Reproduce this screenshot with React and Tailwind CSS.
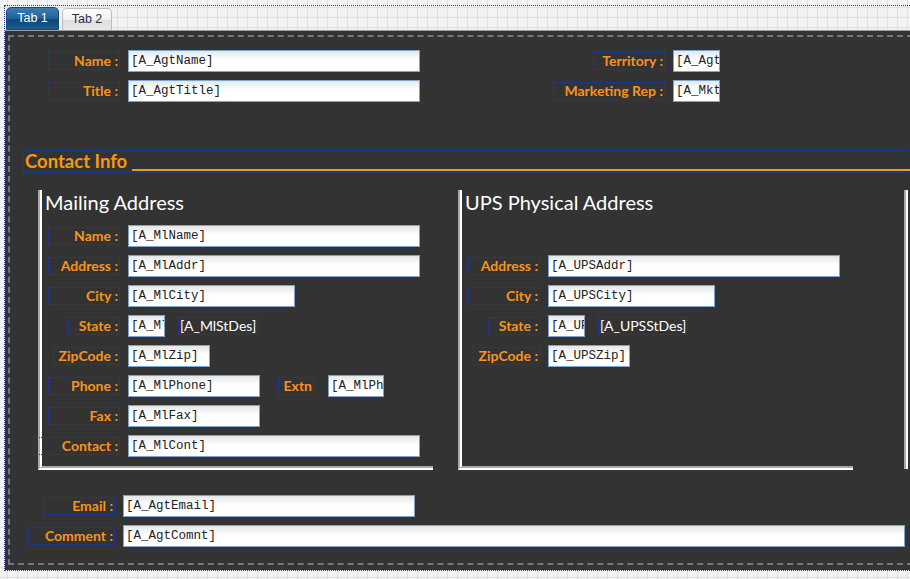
function Label({ text, className = "" }) {
  return (
    <div
      className={`flex h-[18px] shrink-0 items-center justify-end border border-dotted border-[#1d3f93] pr-[1px] text-[14px] leading-none font-bold whitespace-nowrap text-[#f7931e] ${className}`}
    >
      {text}
    </div>
  );
}

function Field({ value, className = "" }) {
  return (
    <div
      className={`h-[22px] shrink-0 overflow-hidden border border-[#7ea3cf] bg-[linear-gradient(#e2e8e8,#ffffff_45%)] pl-[2px] font-['Liberation_Mono',monospace] text-[12.5px] leading-[20px] whitespace-nowrap text-[#222] ${className}`}
    >
      {value}
    </div>
  );
}

function Row({ label, labelW, value, inputW, children }) {
  return (
    <div className="flex h-[22px] items-center">
      <div className="flex w-[78px] shrink-0 justify-end">
        <Label text={label} className={labelW} />
      </div>
      <Field value={value} className={`ml-[8px] ${inputW}`} />
      {children}
    </div>
  );
}

function StDes({ text }) {
  return (
    <div className="ml-[13px] flex h-[18px] shrink-0 items-center border border-dotted border-[#1d3f93] px-[1px] text-[14px] leading-none whitespace-nowrap text-white">
      {text}
    </div>
  );
}

function AddressBox({ title, children }) {
  return (
    <div className="h-[280px] w-[395px] shrink-0 border-b-2 border-l-2 border-b-white border-l-[#a9a9a9]">
      <div className="h-full border-b-2 border-l-2 border-b-[#a9a9a9] border-l-white">
        <div className="pl-[3px] text-[20px] leading-[24px] text-white">{title}</div>
        {children}
      </div>
    </div>
  );
}

export default function App() {
  return (
    <div className="relative h-[579px] w-[910px] overflow-hidden bg-[#f3f3f3] bg-[linear-gradient(to_right,#e0e0e0_1px,transparent_1px),linear-gradient(#e0e0e0_1px,transparent_1px)] bg-[length:10px_10px] bg-[position:7px_7px] font-['Lato',sans-serif]">
      <div className="mt-[5px] ml-[4px] h-[566px] w-[930px] border border-dotted border-[#1f3b7a]">
        {/* tabs */}
        <div className="flex h-[24px] items-end gap-[3px] pl-[1px]">
          <div className="flex h-[23px] w-[53px] items-center justify-center rounded-t-[5px] border border-[#174a74] bg-[linear-gradient(#3b7cb1,#22639a_50%,#0e4876_54%,#1b5b8e)] font-['Liberation_Sans',Arial,sans-serif] text-[12.5px] text-white">
            Tab 1
          </div>
          <div className="flex h-[22px] w-[50px] items-center justify-center rounded-t-[5px] border border-b-0 border-[#bdbdbd] bg-[linear-gradient(#ffffff,#f1f1f1_50%,#dedede_54%,#e8e8e8)] font-['Liberation_Sans',Arial,sans-serif] text-[12.5px] text-[#2c2c55]">
            Tab 2
          </div>
        </div>

        {/* panel */}
        <div className="h-[540px] border-t border-[#9c9c9c] bg-[#333333] pt-[4px] pb-[5px] pl-[3px]">
          <div className="flex h-full flex-col border-2 border-dashed border-[#777777] pt-[13px]">
            {/* agent rows */}
            <div className="flex flex-col gap-[8px] pl-[38px]">
              <div className="flex h-[22px] items-center">
                <Label text="Name :" className="w-[72px]" />
                <Field value="[A_AgtName]" className="ml-[8px] w-[292px]" />
                <div className="flex w-[245px] shrink-0 justify-end">
                  <Label text="Territory :" className="w-[72px]" />
                </div>
                <Field value="[A_AgtTerr]" className="ml-[8px] w-[47px]" />
              </div>
              <div className="flex h-[22px] items-center">
                <Label text="Title :" className="w-[72px]" />
                <Field value="[A_AgtTitle]" className="ml-[8px] w-[292px]" />
                <div className="flex w-[245px] shrink-0 justify-end">
                  <Label text="Marketing Rep :" className="w-[112px]" />
                </div>
                <Field value="[A_MktRep]" className="ml-[8px] w-[47px]" />
              </div>
            </div>

            {/* contact info header */}
            <div className="mt-[48px] ml-[13px] flex h-[23px] items-end border-y border-l border-dotted border-[#1d3f93] pl-[1px]">
              <div className="text-[18.5px] leading-[21px] font-bold text-[#f39a12]">Contact Info</div>
              <div className="mb-[1px] ml-[5px] h-[2px] flex-1 bg-[#f39a12]" />
            </div>

            {/* address boxes */}
            <div className="mt-[17px] flex pl-[28px]">
              <AddressBox title="Mailing Address">
                <div className="mt-[11px] flex flex-col gap-[8px]">
                  <Row label="Name :" labelW="w-[72px]" value="[A_MlName]" inputW="w-[292px]" />
                  <Row label="Address :" labelW="w-[72px]" value="[A_MlAddr]" inputW="w-[292px]" />
                  <Row label="City :" labelW="w-[72px]" value="[A_MlCity]" inputW="w-[167px]" />
                  <Row label="State :" labelW="w-[52px]" value="[A_MlState]" inputW="w-[37px]">
                    <StDes text="[A_MlStDes]" />
                  </Row>
                  <Row label="ZipCode :" labelW="w-[67px]" value="[A_MlZip]" inputW="w-[82px]" />
                  <Row label="Phone :" labelW="w-[72px]" value="[A_MlPhone]" inputW="w-[132px]">
                    <Label text="Extn" className="ml-[18px] w-[36px]" />
                    <Field value="[A_MlPhExt]" className="ml-[14px] w-[56px]" />
                  </Row>
                  <Row label="Fax :" labelW="w-[72px]" value="[A_MlFax]" inputW="w-[132px]" />
                  <Row label="Contact :" labelW="w-[87px]" value="[A_MlCont]" inputW="w-[292px]" />
                </div>
              </AddressBox>

              <div className="ml-[25px] flex h-[280px] w-[450px] shrink-0 justify-between">
                <AddressBox title="UPS Physical Address">
                  <div className="mt-[41px] flex flex-col gap-[8px]">
                    <Row label="Address :" labelW="w-[72px]" value="[A_UPSAddr]" inputW="w-[292px]" />
                    <Row label="City :" labelW="w-[72px]" value="[A_UPSCity]" inputW="w-[167px]" />
                    <Row label="State :" labelW="w-[52px]" value="[A_UPSState]" inputW="w-[37px]">
                      <StDes text="[A_UPSStDes]" />
                    </Row>
                    <Row label="ZipCode :" labelW="w-[67px]" value="[A_UPSZip]" inputW="w-[82px]" />
                  </div>
                </AddressBox>
                <div className="h-[279px] w-[4px] border-r-2 border-l-2 border-r-white border-l-[#a9a9a9]" />
              </div>
            </div>

            {/* email / comment */}
            <div className="mt-[25px] flex flex-col gap-[8px]">
              <div className="flex h-[22px] items-center">
                <div className="flex w-[105px] shrink-0 justify-end">
                  <Label text="Email :" className="w-[72px]" />
                </div>
                <Field value="[A_AgtEmail]" className="ml-[8px] w-[292px]" />
              </div>
              <div className="flex h-[22px] items-center">
                <div className="flex w-[105px] shrink-0 justify-end">
                  <Label text="Comment :" className="w-[87px]" />
                </div>
                <Field value="[A_AgtComnt]" className="ml-[8px] w-[782px]" />
              </div>
            </div>
          </div>
        </div>
      </div>
    </div>
  );
}
